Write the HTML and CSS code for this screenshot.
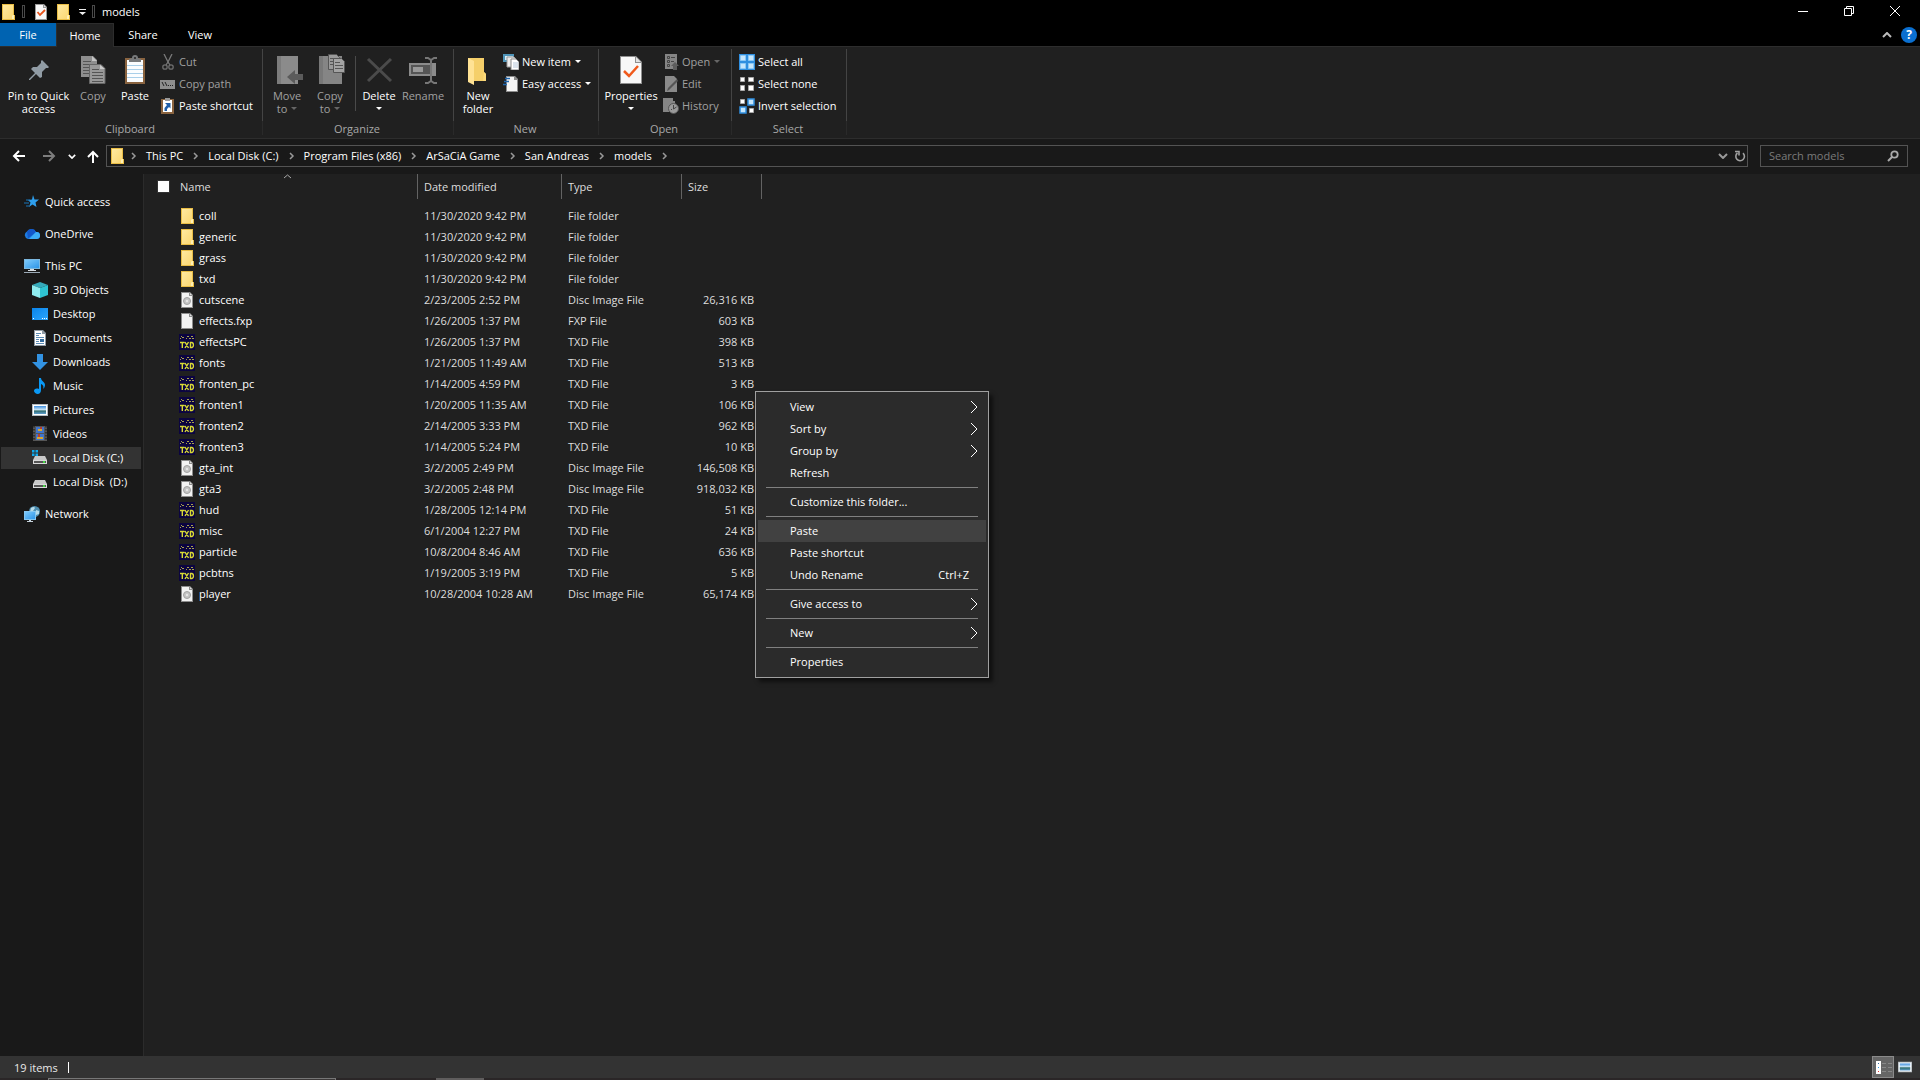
FILE: index.html
```html
<!DOCTYPE html>
<html lang="en">
<head>
<meta charset="utf-8">
<title>models</title>
<link rel="stylesheet" href="styles.css">
</head>
<body>
<svg class="sprite" aria-hidden="true">
  <linearGradient id="g-folder" x1="0" y1="0" x2="1" y2="1"><stop offset="0" stop-color="#ffe9a0"/><stop offset="1" stop-color="#fbd772"/></linearGradient>
  <linearGradient id="g-screen" x1="0" y1="0" x2="1" y2="1"><stop offset="0" stop-color="#7cc9fb"/><stop offset="1" stop-color="#2f96e8"/></linearGradient>
  <linearGradient id="g-desk" x1="0" y1="0" x2="1" y2="1"><stop offset="0" stop-color="#0a84ea"/><stop offset="1" stop-color="#2ba6ff"/></linearGradient>
  <linearGradient id="g-photo" x1="0" y1="0" x2="0" y2="1"><stop offset="0" stop-color="#3f8fe0"/><stop offset=".5" stop-color="#d5ecf8"/><stop offset=".6" stop-color="#2f6b6b"/><stop offset="1" stop-color="#5f9fd0"/></linearGradient>
  <symbol id="i-folder" viewBox="0 0 16 16"><path d="M2 0h12v11h1v5H2z" fill="#e9bd45"/><path d="M3 1h10v14H3z" fill="url(#g-folder)"/><path d="M13 11h1v4h-2v-3z" fill="#fff0b5"/></symbol>
  <symbol id="i-props" viewBox="0 0 16 16"><path d="M2 0h9l3 3v13H2z" fill="#999"/><path d="M3 1h7v3h3v11H3z" fill="#f8f8f8"/><path d="M11 1l2 2h-2z" fill="#ddd"/><path d="M4.500 8l2.500 3 5-5" fill="none" stroke="#e8541c" stroke-width="1.800"/></symbol>
  <symbol id="i-page" viewBox="0 0 16 16"><path d="M2 0h9l3 3v13H2z" fill="#8d8d8d"/><path d="M3 1h7v3h3v11H3z" fill="#f3f3f3"/><path d="M11 1l2 2h-2z" fill="#ddd"/></symbol>
  <symbol id="i-disc" viewBox="0 0 16 16"><use href="#i-page"/><circle cx="8" cy="9" r="3.500" fill="#c4c4c4" stroke="#a2a2a2"/><circle cx="8" cy="9" r="1.200" fill="#e6e6e6"/></symbol>
  <symbol id="i-txd" viewBox="0 0 16 16"><path d="M0 0h16v16H0z" fill="#0b0440"/><path d="M1 4h1v1H1zM3 3h2v1H3zM7 4h1v1H7zM8 2h2v1H8zM10 4h2v1h-2zM12 2h2v1h-2zM13 4h2v1h-2zM2 2h1v1H2z" fill="#a7a24b"/><path d="M1 8.500h4.500M3.300 8.500V14M6 8l3.500 6M9.500 8L6 14M11.500 8.500v5H13q1.500-.5 1.500-2.500T13 8.500z" fill="none" stroke="#d9da35" stroke-width="1.400"/></symbol>
  <symbol id="i-pin" viewBox="0 0 32 32"><path d="M19 6l7 7-1 1h-2l-4 4v5l-2 1-4-4-6 6H6v-1l6-6-4-4 2-2h4l4-4V7z" fill="#919ca5"/></symbol>
  <symbol id="i-copy" viewBox="0 0 32 32"><path d="M4 2h12l4 4v17H4z" fill="#8e8e8e"/><path d="M15 2l5 5h-5z" fill="#c4c4c4"/><path d="M6 7.500h8M6 10.500h12M6 13.500h12M6 16.500h12M6 19.500h12" stroke="#555"/><path d="M12.500 10.500H24l4 4v15H12.500z" fill="#999" stroke="#666"/><path d="M23 11l5 4h-5z" fill="#ccc"/><path d="M15 15.500h7M15 18.500h11M15 21.500h11M15 24.500h11M15 27.500h11" stroke="#555"/></symbol>
  <symbol id="i-paste" viewBox="0 0 32 32"><path d="M6 4h20v26H6z" fill="#8a6440"/><path d="M8 6h16v22H8z" fill="#fbfdff"/><path d="M8 11.500h16M8 15.500h16M8 19.500h16M8 23.500h16" stroke="#a9cfe9"/><path d="M10 8V5l3-1a3 3 0 0 1 6 0l3 1v3z" fill="#77797b"/><circle cx="16" cy="4" r="1" fill="#222"/></symbol>
  <symbol id="i-cut" viewBox="0 0 16 16"><path d="M4 0l4 8 2 3M12 0L8 8l-2 3" fill="none" stroke="#7a7a7a" stroke-width="1.300"/><circle cx="5" cy="13" r="2.200" fill="none" stroke="#6d6d6d" stroke-width="1.300"/><circle cx="11" cy="13" r="2.200" fill="none" stroke="#6d6d6d" stroke-width="1.300"/></symbol>
  <symbol id="i-path" viewBox="0 0 16 16"><path d="M0 4h15v9H0z" fill="#8e8e8e"/><path d="M2 6l2 4M5 6l2 4M8 9.500h1M10 9.500h1M12 9.500h1" stroke="#222" fill="none"/></symbol>
  <symbol id="i-pshort" viewBox="0 0 16 16"><path d="M1 1h13v15H1z" fill="#8a6440"/><path d="M3 2h9v12H3z" fill="#fff"/><path d="M5 0h5v3H5z" fill="#999"/><path d="M5 5h5.500v5.500L9 9l-2 2v2H4.500v-3L7 7z" fill="#1f5ea8"/></symbol>
  <symbol id="i-move" viewBox="0 0 32 32"><path d="M6 2h21v28H6z" fill="#8b8b8b"/><path d="M6 2h4v28H6z" fill="#7c7c7c"/><path d="M16 23l8-7v4h8v6h-8v4z" fill="#5b5b5b"/></symbol>
  <symbol id="i-copyto" viewBox="0 0 32 32"><path d="M5 2h23v28H5z" fill="#858585"/><path d="M5 2h4v28H5z" fill="#787878"/><path d="M14.500.5h8l3 3v12h-11z" fill="#999" stroke="#555"/><path d="M16 4.500h7M16 7.500h8M16 10.500h8" stroke="#555"/><path d="M19.500 4.500h8l3 3v11h-11z" fill="#a3a3a3" stroke="#555"/><path d="M21 8.500h5M21 11.500h8M21 14.500h8" stroke="#555"/></symbol>
  <symbol id="i-delete" viewBox="0 0 32 32"><path d="M5 5l23 22M28 5L5 27" stroke="#4b4b4b" stroke-width="3"/></symbol>
  <symbol id="i-rename" viewBox="0 0 32 32"><path d="M2 9h27v13H2z" fill="#8b8b8b"/><path d="M4 11h19v9H4z" fill="#555"/><path d="M6 13h10v5H6z" fill="#999"/><path d="M18 4h3l3 2 3-2h3M24 6v21M18 29h3l3-2 3 2h3" fill="none" stroke="#777" stroke-width="2"/></symbol>
  <symbol id="i-newfolder" viewBox="0 0 32 32"><path d="M6 4h16v14l2 2v7H6z" fill="#f5cf6a"/><path d="M6 4l6 3v24l-6-3z" fill="#ffe294"/><path d="M22 18l2 2v7h-3z" fill="#fbd97b"/></symbol>
  <symbol id="i-newitem" viewBox="0 0 16 16"><path d="M0 0h11v8H0z" fill="#4f94b8"/><path d="M2 2h8v4H2z" fill="#d7edf7"/><path d="M4 3h7l2 2v8H4z" fill="#eee" stroke="#999"/><path d="M8 5h5l3 3v8H8z" fill="#fff" stroke="#888"/><path d="M10 9h5M10 11h5M10 13h5" stroke="#b7c7da"/></symbol>
  <symbol id="i-easy" viewBox="0 0 16 16"><path d="M3 0h9l3 3v13H3z" fill="#8d8d8d"/><path d="M4 1h7v3h3v11H4z" fill="#f5f5f5"/><path d="M2 2.500h5M1 5.500h5M0 8.500h4" stroke="#1d66ae" stroke-width="1.500"/></symbol>
  <symbol id="i-bigprops" viewBox="0 0 32 32"><path d="M5 2h16l6 6v22H5z" fill="#8f8f8f"/><path d="M6 3h14v6h6v20H6z" fill="#f8f8f8"/><path d="M21 3l5 5h-5z" fill="#e3e3e3"/><path d="M9 17l5 5 9-10" fill="none" stroke="#f05a1c" stroke-width="2.500"/></symbol>
  <symbol id="i-open" viewBox="0 0 16 16"><path d="M2 0h12v15H2z" fill="#858585"/><path d="M4.500 2.500h2v2h-2zM4.500 6.500h2v2h-2zM4.500 10.500h2v2h-2zM8 3.500h4M8 7.500h3" fill="none" stroke="#444"/><path d="M12 8l4 4h-2v4h-4v-4H8z" fill="#5d5d5d"/></symbol>
  <symbol id="i-edit" viewBox="0 0 16 16"><path d="M2 0h9l3 3v13H2z" fill="#8a8a8a"/><path d="M15 5L6 14l-2 1 1-3 9-9z" fill="#555"/></symbol>
  <symbol id="i-history" viewBox="0 0 16 16"><path d="M0 0h10v3h2v11H0z" fill="#858585"/><circle cx="10.500" cy="10.500" r="5" fill="#999" stroke="#555"/><path d="M10.500 7v4l3-2M8 12l1-1" fill="none" stroke="#444"/></symbol>
  <symbol id="i-selall" viewBox="0 0 16 16"><path d="M0 0h16v16H0z" fill="#2f8fe0"/><path d="M1.500 1.500h5v5h-5zM9.500 1.500h5v5h-5zM1.500 9.500h5v5h-5zM9.500 9.500h5v5h-5z" fill="#c6e6fb" stroke="#8cc8f5"/></symbol>
  <symbol id="i-selnone" viewBox="0 0 16 16"><path d="M1.500 1.500h4v4h-4zM9.500 1.500h5v4h-5zM1.500 9.500h4v5h-4zM9.500 9.500h5v5h-5z" fill="#fff" stroke="#a9a9a9"/></symbol>
  <symbol id="i-selinv" viewBox="0 0 16 16"><path d="M1.500 1.500h4v4h-4zM10.500 10.500h4v4h-4z" fill="#fff" stroke="#a9a9a9"/><path d="M9 1h6v6H9zM1 9h6v6H1z" fill="#c6e6fb" stroke="#2f8fe0" stroke-width="1.500"/></symbol>
  <symbol id="i-star" viewBox="0 0 16 16"><path d="M9 1l1.500 4.500H15l-3.500 3 1 4.500-4-2.500L5 13l1.500-4.500L4 6l4-.5z" fill="#2e9fee"/><path d="M2 6h4M0 9h5M2 12h3" stroke="#1976bb"/></symbol>
  <symbol id="i-cloud" viewBox="0 0 16 16"><path d="M4 13a4 4 0 0 1-1-7.500A5 5 0 0 1 12 6a3.500 3.500 0 0 1 1 7z" fill="#1d7ce0"/><path d="M3 5.500a5 5 0 0 1 9 .5L4 12.500z" fill="#1358c9"/><path d="M5 13l7-7a3.500 3.500 0 0 1 1 7z" fill="#3cadf5"/></symbol>
  <symbol id="i-pc" viewBox="0 0 16 16"><path d="M0 1h16v10H0z" fill="#7bb8e0"/><path d="M1 2h14v8H1z" fill="url(#g-screen)"/><path d="M6 11h4v1H6zM4 12h8v1H4z" fill="#d7dde2"/><path d="M0 14h16v1H0z" fill="#9ba9b5"/></symbol>
  <symbol id="i-cube" viewBox="0 0 16 16"><path d="M0 3l8-3 8 3-8 3z" fill="#35aabb"/><path d="M0 3l8 3v10l-8-3z" fill="#8fecef"/><path d="M16 3L8 6v10l8-3z" fill="#2fc3d2"/></symbol>
  <symbol id="i-desktop" viewBox="0 0 16 16"><path d="M0 2h16v12H0z" fill="url(#g-desk)"/><path d="M1 12h1v1H1zM10 12h1v1h-1zM12 12h1v1h-1zM14 12h1v1h-1z" fill="#fff"/></symbol>
  <symbol id="i-doc" viewBox="0 0 16 16"><path d="M2 0h9l3 3v13H2z" fill="#8f9aa4"/><path d="M3 1h7v3h3v11H3z" fill="#fff"/><path d="M4 5.500h3M4 7.500h8M4 9.500h3M4 11.500h3M4 13.500h8M4 3.500h5" stroke="#5d8cb5"/><path d="M8 9h4v3H8z" fill="#346b9d"/></symbol>
  <symbol id="i-down" viewBox="0 0 16 16"><path d="M5 0h6v8h5l-8 8-8-8h5z" fill="#3292e2"/></symbol>
  <symbol id="i-music" viewBox="0 0 16 16"><path d="M7 0h2c0 3 4 4 4 7 0 2-1 3-2 4 1-3 0-4-2-5v6c0 6-7 4-7 1 0-2 2-3 5-2z" fill="#0a98f4"/></symbol>
  <symbol id="i-photo" viewBox="0 0 16 16"><path d="M0 2h16v12H0z" fill="#b5bcc1"/><path d="M1 3h14v10H1z" fill="#fff"/><path d="M2 4h12v8H2z" fill="url(#g-photo)"/></symbol>
  <symbol id="i-video" viewBox="0 0 16 16"><path d="M1 0h14v15H1z" fill="#555"/><path d="M4 1h8v6H4zM4 8h8v6H4z" fill="#3f74cc"/><path d="M6 3h4v2H6zM5 11h6v2H5z" fill="#d7a62f"/><path d="M8 1h2v2H8zM6 8h2v3H6z" fill="#b53d34"/><path d="M2 0v15M14 0v15" stroke="#111" stroke-dasharray="1.500 1.500"/></symbol>
  <symbol id="i-diskd" viewBox="0 0 16 16"><path d="M3 6h10l2 4H1z" fill="#c9c9c9"/><path d="M1 10h14v4H1z" fill="#d9d9d9"/><path d="M2 11h12v2H2z" fill="#555"/><path d="M11 11h2v2h-2z" fill="#45d645"/></symbol>
  <symbol id="i-diskc" viewBox="0 0 16 16"><use href="#i-diskd"/><path d="M0 0h2.500v2.500H0zM3.500 0H6v2.500H3.500zM0 3.500h2.500V6H0zM3.500 3.500H6V6H3.500z" fill="#0fabf0"/></symbol>
  <symbol id="i-net" viewBox="0 0 16 16"><circle cx="10.500" cy="5.500" r="5.500" fill="#4d8db0"/><path d="M7 2q3-2 4 0l-2 3-3 1zM12 4l3 1v3l-3 1z" fill="#b8dbe8"/><path d="M0 5h12v9H0z" fill="#86c8f2"/><path d="M1 6h10v7H1z" fill="url(#g-screen)"/><path d="M5 14h2v1h2v1H3v-1h2z" fill="#c7d4dd"/></symbol>
  <symbol id="i-caret" viewBox="0 0 6 4"><path d="M0 0h6L3 3z" fill="currentColor"/></symbol>
  <symbol id="i-crumb" viewBox="0 0 6 8"><path d="M1 1l3 3-3 3" fill="none" stroke="currentColor" stroke-width="1.500"/></symbol>
  <symbol id="i-sub" viewBox="0 0 8 14"><path d="M1 1l6 6-6 6" fill="none" stroke="currentColor"/></symbol>
  <symbol id="i-chev" viewBox="0 0 10 6"><path d="M1 1l4 4 4-4" fill="none" stroke="currentColor" stroke-width="2"/></symbol>
</svg>

<header class="titlebar">
  <svg class="ic"><use href="#i-folder"/></svg>
  <span class="tick"></span>
  <button class="plain" aria-label="Properties"><svg class="ic"><use href="#i-props"/></svg></button>
  <button class="plain" aria-label="New folder"><svg class="ic"><use href="#i-folder"/></svg></button>
  <button class="plain customize" aria-label="Customize Quick Access Toolbar"><svg width="7" height="6"><path d="M0 0h7v1H0zM0 3h7L3.500 6z" fill="#eee"/></svg></button>
  <span class="tick"></span>
  <h1>models</h1>
  <div class="winbtns">
    <button aria-label="Minimize"><svg width="10" height="10"><path d="M0 5h10v1H0z" fill="#fff"/></svg></button>
    <button aria-label="Restore"><svg width="10" height="10"><path d="M.5 2.500h7v7h-7zM2.500 2.500v-2h7v7h-2" fill="none" stroke="#fff"/></svg></button>
    <button aria-label="Close"><svg width="10" height="10"><path d="M0 0l10 10M10 0L0 10" stroke="#fff"/></svg></button>
  </div>
</header>

<nav class="tabs">
  <button class="file">File</button>
  <button class="active">Home</button>
  <button>Share</button>
  <button>View</button>
  <div class="tabs-end">
    <button class="plain" aria-label="Minimize the Ribbon"><svg class="flip" width="10" height="6"><use href="#i-chev"/></svg></button>
    <button class="plain help" aria-label="Help">?</button>
  </div>
</nav>

<section class="ribbon">
  <div class="group clipboard">
    <div class="tools">
      <button class="big pin"><svg><use href="#i-pin"/></svg>Pin to Quick<br>access</button>
      <button class="big narrow" disabled><svg><use href="#i-copy"/></svg>Copy</button>
      <button class="big paste"><svg><use href="#i-paste"/></svg>Paste</button>
      <div class="stack">
        <button class="small" disabled><svg class="ic"><use href="#i-cut"/></svg>Cut</button>
        <button class="small" disabled><svg class="ic"><use href="#i-path"/></svg>Copy path</button>
        <button class="small"><svg class="ic"><use href="#i-pshort"/></svg>Paste shortcut</button>
      </div>
    </div>
    <h2>Clipboard</h2>
  </div>
  <div class="group organize">
    <div class="tools">
      <button class="big" disabled><svg><use href="#i-move"/></svg>Move<span>to <svg class="caret"><use href="#i-caret"/></svg></span></button>
      <button class="big copyto" disabled><svg><use href="#i-copyto"/></svg>Copy<span>to <svg class="caret"><use href="#i-caret"/></svg></span></button>
      <span class="rule"></span>
      <button class="big"><svg><use href="#i-delete"/></svg>Delete<span><svg class="caret"><use href="#i-caret"/></svg></span></button>
      <button class="big" disabled><svg><use href="#i-rename"/></svg>Rename</button>
    </div>
    <h2>Organize</h2>
  </div>
  <div class="group new">
    <div class="tools">
      <button class="big"><svg><use href="#i-newfolder"/></svg>New<br>folder</button>
      <div class="stack">
        <button class="small"><svg class="ic"><use href="#i-newitem"/></svg>New item<svg class="caret"><use href="#i-caret"/></svg></button>
        <button class="small"><svg class="ic"><use href="#i-easy"/></svg>Easy access<svg class="caret"><use href="#i-caret"/></svg></button>
      </div>
    </div>
    <h2>New</h2>
  </div>
  <div class="group open">
    <div class="tools">
      <button class="big wide"><svg><use href="#i-bigprops"/></svg>Properties<span><svg class="caret"><use href="#i-caret"/></svg></span></button>
      <div class="stack">
        <button class="small" disabled><svg class="ic"><use href="#i-open"/></svg>Open<svg class="caret"><use href="#i-caret"/></svg></button>
        <button class="small" disabled><svg class="ic"><use href="#i-edit"/></svg>Edit</button>
        <button class="small" disabled><svg class="ic"><use href="#i-history"/></svg>History</button>
      </div>
    </div>
    <h2>Open</h2>
  </div>
  <div class="group select">
    <div class="tools">
      <div class="stack">
        <button class="small"><svg class="ic"><use href="#i-selall"/></svg>Select all</button>
        <button class="small"><svg class="ic"><use href="#i-selnone"/></svg>Select none</button>
        <button class="small"><svg class="ic"><use href="#i-selinv"/></svg>Invert selection</button>
      </div>
    </div>
    <h2>Select</h2>
  </div>
</section>

<div class="navbar">
  <div class="history">
    <button class="plain" aria-label="Back"><svg width="14" height="12"><path d="M13 6H2M7 1L2 6l5 5" fill="none" stroke="#fff" stroke-width="2"/></svg></button>
    <button class="plain" aria-label="Forward"><svg width="14" height="12"><path d="M1 6h11M7 1l5 5-5 5" fill="none" stroke="#7d7d7d" stroke-width="2"/></svg></button>
    <button class="plain" aria-label="Recent locations"><svg width="8" height="5" viewBox="0 0 10 6"><use href="#i-chev"/></svg></button>
    <button class="plain" aria-label="Up"><svg width="12" height="13"><path d="M6 13V2M1 7l5-5 5 5" fill="none" stroke="#fff" stroke-width="2"/></svg></button>
  </div>
  <div class="address">
    <svg class="ic"><use href="#i-folder"/></svg>
    <svg class="crumb"><use href="#i-crumb"/></svg>
    <button class="plain">This PC</button>
    <svg class="crumb"><use href="#i-crumb"/></svg>
    <button class="plain">Local Disk (C:)</button>
    <svg class="crumb"><use href="#i-crumb"/></svg>
    <button class="plain">Program Files (x86)</button>
    <svg class="crumb"><use href="#i-crumb"/></svg>
    <button class="plain">ArSaCiA Game</button>
    <svg class="crumb"><use href="#i-crumb"/></svg>
    <button class="plain">San Andreas</button>
    <svg class="crumb"><use href="#i-crumb"/></svg>
    <button class="plain">models</button>
    <svg class="crumb"><use href="#i-crumb"/></svg>
    <div class="address-end">
      <button class="plain" aria-label="Previous locations"><svg width="10" height="6"><use href="#i-chev"/></svg></button>
      <button class="plain" aria-label="Refresh"><svg width="12" height="12"><path d="M9 3.200a4.300 4.300 0 1 1-5.500-.2M1 1.500h4v4" fill="none" stroke="#a0a0a0" stroke-width="1.600"/></svg></button>
    </div>
  </div>
  <form class="search">
    <input type="search" placeholder="Search models" aria-label="Search models">
    <button class="plain" type="button" aria-label="Search"><svg width="12" height="12"><circle cx="7.500" cy="4.500" r="3.200" fill="none" stroke="#aaa" stroke-width="1.800"/><path d="M5 7l-4 4" stroke="#aaa" stroke-width="2"/></svg></button>
  </form>
</div>

<main>
  <nav class="tree">
    <a href="#"><svg class="ic"><use href="#i-star"/></svg>Quick access</a>
    <a href="#"><svg class="ic"><use href="#i-cloud"/></svg>OneDrive</a>
    <div class="branch">
      <a href="#"><svg class="ic"><use href="#i-pc"/></svg>This PC</a>
      <a class="sub" href="#"><svg class="ic"><use href="#i-cube"/></svg>3D Objects</a>
      <a class="sub" href="#"><svg class="ic"><use href="#i-desktop"/></svg>Desktop</a>
      <a class="sub" href="#"><svg class="ic"><use href="#i-doc"/></svg>Documents</a>
      <a class="sub" href="#"><svg class="ic"><use href="#i-down"/></svg>Downloads</a>
      <a class="sub" href="#"><svg class="ic"><use href="#i-music"/></svg>Music</a>
      <a class="sub" href="#"><svg class="ic"><use href="#i-photo"/></svg>Pictures</a>
      <a class="sub" href="#"><svg class="ic"><use href="#i-video"/></svg>Videos</a>
      <a class="sub current" href="#"><svg class="ic"><use href="#i-diskc"/></svg>Local Disk (C:)</a>
      <a class="sub" href="#"><svg class="ic"><use href="#i-diskd"/></svg>Local Disk&nbsp; (D:)</a>
    </div>
    <a href="#"><svg class="ic"><use href="#i-net"/></svg>Network</a>
  </nav>

  <section class="files">
    <table>
      <colgroup><col class="c-name"><col class="c-date"><col class="c-type"><col class="c-size"></colgroup>
      <thead>
        <tr>
          <th><div class="head first"><input type="checkbox" aria-label="Select all items">Name<svg class="sort" width="9" height="5"><path d="M1 4l3.500-3L8 4" fill="none" stroke="#aaa"/></svg></div></th>
          <th><div class="head">Date modified</div></th>
          <th><div class="head">Type</div></th>
          <th><div class="head">Size</div></th>
        </tr>
      </thead>
      <tbody>
        <tr><td><svg class="ic"><use href="#i-folder"/></svg>coll</td><td>11/30/2020 9:42 PM</td><td>File folder</td><td></td></tr>
        <tr><td><svg class="ic"><use href="#i-folder"/></svg>generic</td><td>11/30/2020 9:42 PM</td><td>File folder</td><td></td></tr>
        <tr><td><svg class="ic"><use href="#i-folder"/></svg>grass</td><td>11/30/2020 9:42 PM</td><td>File folder</td><td></td></tr>
        <tr><td><svg class="ic"><use href="#i-folder"/></svg>txd</td><td>11/30/2020 9:42 PM</td><td>File folder</td><td></td></tr>
        <tr><td><svg class="ic"><use href="#i-disc"/></svg>cutscene</td><td>2/23/2005 2:52 PM</td><td>Disc Image File</td><td>26,316 KB</td></tr>
        <tr><td><svg class="ic"><use href="#i-page"/></svg>effects.fxp</td><td>1/26/2005 1:37 PM</td><td>FXP File</td><td>603 KB</td></tr>
        <tr><td><svg class="ic"><use href="#i-txd"/></svg>effectsPC</td><td>1/26/2005 1:37 PM</td><td>TXD File</td><td>398 KB</td></tr>
        <tr><td><svg class="ic"><use href="#i-txd"/></svg>fonts</td><td>1/21/2005 11:49 AM</td><td>TXD File</td><td>513 KB</td></tr>
        <tr><td><svg class="ic"><use href="#i-txd"/></svg>fronten_pc</td><td>1/14/2005 4:59 PM</td><td>TXD File</td><td>3 KB</td></tr>
        <tr><td><svg class="ic"><use href="#i-txd"/></svg>fronten1</td><td>1/20/2005 11:35 AM</td><td>TXD File</td><td>106 KB</td></tr>
        <tr><td><svg class="ic"><use href="#i-txd"/></svg>fronten2</td><td>2/14/2005 3:33 PM</td><td>TXD File</td><td>962 KB</td></tr>
        <tr><td><svg class="ic"><use href="#i-txd"/></svg>fronten3</td><td>1/14/2005 5:24 PM</td><td>TXD File</td><td>10 KB</td></tr>
        <tr><td><svg class="ic"><use href="#i-disc"/></svg>gta_int</td><td>3/2/2005 2:49 PM</td><td>Disc Image File</td><td>146,508 KB</td></tr>
        <tr><td><svg class="ic"><use href="#i-disc"/></svg>gta3</td><td>3/2/2005 2:48 PM</td><td>Disc Image File</td><td>918,032 KB</td></tr>
        <tr><td><svg class="ic"><use href="#i-txd"/></svg>hud</td><td>1/28/2005 12:14 PM</td><td>TXD File</td><td>51 KB</td></tr>
        <tr><td><svg class="ic"><use href="#i-txd"/></svg>misc</td><td>6/1/2004 12:27 PM</td><td>TXD File</td><td>24 KB</td></tr>
        <tr><td><svg class="ic"><use href="#i-txd"/></svg>particle</td><td>10/8/2004 8:46 AM</td><td>TXD File</td><td>636 KB</td></tr>
        <tr><td><svg class="ic"><use href="#i-txd"/></svg>pcbtns</td><td>1/19/2005 3:19 PM</td><td>TXD File</td><td>5 KB</td></tr>
        <tr><td><svg class="ic"><use href="#i-disc"/></svg>player</td><td>10/28/2004 10:28 AM</td><td>Disc Image File</td><td>65,174 KB</td></tr>
      </tbody>
    </table>
  </section>
</main>

<footer class="status">
  <span class="count">19 items</span>
  <div class="views">
    <button class="plain on" aria-label="Details"><svg width="20" height="20"><path d="M3 4h5v13H3z" fill="#fff"/><path d="M5 6h1v1H5z" fill="#3a6ea5"/><path d="M5 10h1v1H5z" fill="#2e9fee"/><path d="M5 14h1v1H5z" fill="#d33"/><path d="M9 6.500h4M15 6.500h4M9 10.500h4M15 10.500h4M9 14.500h4M15 14.500h4" stroke="#888"/></svg></button>
    <button class="plain" aria-label="Large thumbnails"><svg width="14" height="14"><use href="#i-photo"/></svg></button>
  </div>
</footer>
<div class="taskbar"><span class="task-search"></span><span class="task-app"></span></div>

<div class="menu" role="menu">
  <button role="menuitem">View<svg class="arrow"><use href="#i-sub"/></svg></button>
  <button role="menuitem">Sort by<svg class="arrow"><use href="#i-sub"/></svg></button>
  <button role="menuitem">Group by<svg class="arrow"><use href="#i-sub"/></svg></button>
  <button role="menuitem">Refresh</button>
  <hr>
  <button role="menuitem">Customize this folder...</button>
  <hr>
  <button role="menuitem" class="hover">Paste</button>
  <button role="menuitem">Paste shortcut</button>
  <button role="menuitem">Undo Rename<kbd>Ctrl+Z</kbd></button>
  <hr>
  <button role="menuitem">Give access to<svg class="arrow"><use href="#i-sub"/></svg></button>
  <hr>
  <button role="menuitem">New<svg class="arrow"><use href="#i-sub"/></svg></button>
  <hr>
  <button role="menuitem">Properties</button>
</div>
</body>
</html>
```
FILE: styles.css
```css
* { box-sizing: border-box; }

body {
  margin: 0;
  min-height: 100vh;
  display: flex;
  flex-direction: column;
  background: #202020;
  color: #fff;
  font: 11px/14px "Open Sans", "Noto Sans", sans-serif;
}

button, input { font: inherit; color: inherit; }
button { background: none; border: 0; padding: 0; margin: 0; }
svg { display: block; flex: none; }
h1, h2 { margin: 0; font-weight: 400; }

.sprite { position: absolute; width: 0; height: 0; }
.ic { width: 16px; height: 16px; }
.plain { display: flex; align-items: center; justify-content: center; }

/* Title bar */
.titlebar {
  height: 23px;
  display: flex;
  align-items: center;
  background: #000;
}
.titlebar .tick { width: 3px; height: 13px; margin: 0 5px 0 6px; border: 1px solid #4a4a4a; }
.titlebar .plain { width: 22px; }
.titlebar .customize { width: 16px; }
.titlebar h1 { font-size: 11px; }
.titlebar .customize + .tick { margin: 0 7px 0 2px; }
.winbtns { display: flex; align-self: stretch; margin-left: auto; padding: 0 2px 2px 0; }
.winbtns button { width: 46px; display: flex; align-items: center; justify-content: center; }

/* Ribbon tabs */
.tabs { height: 24px; display: flex; background: #000; border-bottom: 1px solid #2d2d2d; }
.tabs > button { width: 56px; margin-right: 1px; }
.tabs .file { background: #0063b1; margin-right: 0; }
.tabs .active { width: 58px; margin-bottom: -1px; background: #202020; border: 1px solid #2d2d2d; border-bottom: 0; }
.tabs-end { display: flex; align-items: center; gap: 9px; margin-left: auto; padding-right: 3px; color: #bbb; }
.flip { transform: rotate(180deg); }
.help { width: 16px; height: 16px; border-radius: 50%; background: #0a6fd0; color: #fff; font-size: 12px; font-weight: 700; }

/* Ribbon */
.ribbon { height: 92px; display: flex; border-bottom: 1px solid #2d2d2d; }
.group { padding-top: 2px; }
.clipboard { width: 263px; }
.organize { width: 191px; }
.new { width: 145px; }
.open { width: 133px; }
.select { width: 115px; }
.tools { height: 72px; display: flex; padding: 2px 0 0 2px; border-right: 1px solid #444; }
.open .tools { padding-left: 1px; }
.select .tools { padding-left: 6px; }
.group h2 {
  height: 14px;
  padding-right: 2px;
  border-right: 1px solid #2a2a2a;
  text-align: center;
  font-size: 11px;
  line-height: 16px;
  color: #a8a8a8;
}
.big {
  width: 44px;
  display: flex;
  flex-direction: column;
  align-items: center;
  line-height: 13px;
  padding-top: 3px;
  white-space: nowrap;
}
.big > svg { width: 32px; height: 32px; margin-bottom: 3px; }
.big.pin { width: 73px; }
.big.narrow { width: 36px; }
.big.paste { width: 48px; }
.big.copyto { width: 42px; }
.big.wide { width: 62px; }
.big span { display: flex; align-items: center; gap: 4px; height: 13px; }
.caret { width: 6px; height: 4px; }
.small { display: flex; align-items: center; gap: 3px; height: 22px; padding: 0 1px; white-space: nowrap; }
.small .caret { margin-left: 1px; }
.new .stack { padding-left: 2px; }
.ribbon button:disabled { color: #a0a0a0; }
.ribbon button:disabled .caret { color: #666; }
.rule { width: 1px; height: 55px; margin: 5px 1px 0 4px; background: #4a4a4a; }

/* Navigation and address */
.navbar { height: 35px; display: flex; align-items: center; padding: 0 12px 1px 12px; background: #191919; }
.history { width: 94px; display: flex; align-items: center; gap: 14px; }
.history button:nth-child(2) { margin-left: 2px; margin-right: -2px; }
.history button:nth-child(4) { margin-left: -3px; }
.address { flex: 1; height: 22px; display: flex; align-items: center; border: 1px solid #535353; padding: 0 1px 0 2px; }
.crumb { width: 6px; height: 8px; margin: 0 9px 0 10px; color: #999; }
.address .ic + .crumb { margin-left: 6px; }
.address-end { display: flex; align-items: center; gap: 6px; margin-left: auto; color: #999; }
.search { width: 148px; height: 22px; display: flex; align-items: center; margin-left: 12px; padding: 0 8px; border: 1px solid #535353; }
.search input { flex: 1; min-width: 0; padding: 0; border: 0; outline: 0; background: none; }
.search input::placeholder { color: #7b7b7b; opacity: 1; }

/* Main area */
main { flex: 1; display: flex; }
.tree { width: 144px; padding: 16px 2px 0 1px; background: #191919; border-right: 1px solid #2b2b2b; }
.tree a {
  display: flex;
  align-items: center;
  gap: 5px;
  height: 22px;
  margin: 1px 0 10px;
  padding-left: 23px;
  color: #fff;
  text-decoration: none;
  white-space: nowrap;
}
.tree .branch a { margin-bottom: 2px; }
.tree .branch { margin-bottom: 10px; }
.tree .sub { padding-left: 31px; }
.tree .current { background: #333; }

.files { flex: 1; }
table { width: 618px; table-layout: fixed; border-collapse: collapse; }
.c-name { width: 274px; }
.c-date { width: 144px; }
.c-type { width: 120px; }
.c-size { width: 80px; }
th { height: 31px; padding: 0; vertical-align: top; font-weight: 400; text-align: left; color: #dedede; }
.head { height: 25px; display: flex; align-items: center; padding-left: 6px; border-right: 1px solid #636363; }
.head.first { position: relative; gap: 10px; padding-left: 13px; }
.head input { appearance: none; width: 13px; height: 13px; margin: 0; background: #fff; border: 1px solid #333; }
.sort { position: absolute; top: 0; left: 139px; }
td { height: 21px; padding: 0 0 0 6px; color: #dedede; white-space: nowrap; }
td:first-child { display: flex; align-items: center; gap: 4px; padding-left: 35px; color: #fff; }
td:last-child { padding: 0 8px 0 0; text-align: right; }

/* Status bar */
.status { height: 22px; display: flex; align-items: center; padding: 0 8px 0 14px; background: #333; }
.count { padding-right: 10px; border-right: 1px solid #fff; line-height: 11px; color: #e8e8e8; }
.views { display: flex; align-items: center; gap: 4px; margin-left: auto; }
.views .on { width: 22px; height: 22px; background: #666; border: 1px solid #8a8a8a; }
.taskbar { height: 2px; display: flex; background: #2a2627; }
.task-search { width: 288px; margin: 0 100px 0 48px; background: #3b3838; border: 1px solid #777; border-bottom: 0; }
.task-app { width: 48px; background: #5f5d5d; }

/* Context menu */
.menu {
  position: absolute;
  left: 755px;
  top: 391px;
  width: 234px;
  padding: 4px 2px;
  background: #2b2b2b;
  border: 1px solid #a0a0a0;
  box-shadow: 4px 4px 4px rgba(0, 0, 0, .5);
}
.menu button { width: 100%; height: 22px; display: flex; align-items: center; padding: 0 8px 0 32px; }
.menu .hover { background: #414141; }
.menu hr { margin: 3px 8px; border: 0; height: 1px; background: #808080; }
.menu .arrow { width: 8px; height: 14px; margin-left: auto; }
.menu kbd { margin-left: auto; padding-right: 9px; font: inherit; }
```
